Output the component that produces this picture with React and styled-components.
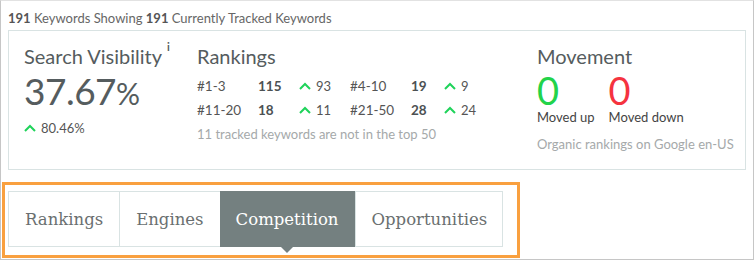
import React from 'react'
import styled, { createGlobalStyle } from 'styled-components'

const GlobalStyle = createGlobalStyle`
  body {
    margin: 0;
    background: #fff;
    font-family: Lato, "Open Sans", sans-serif;
  }
`

const Frame = styled.div`
  box-sizing: border-box;
  width: 754px;
  height: 260px;
  border: 1px solid #c6c6c6;
  border-top-color: #e2e2e2;
  position: relative;
`

const Summary = styled.div`
  font-size: 13px;
  color: #666;
  padding: 9px 0 0 7px;
  height: 20px;
  b {
    font-weight: 700;
    color: #555;
  }
`

const Card = styled.div`
  box-sizing: border-box;
  margin: 0 7px;
  height: 140px;
  border: 1px solid #d9e3e3;
  padding: 12px 0 0 15px;
  display: grid;
  grid-template-columns: 173px 340px 1fr;
`

const Heading = styled.div`
  font-size: 20px;
  color: #555c5e;
  line-height: 26px;
  sup {
    position: relative;
    top: -5px;
    font-size: 11px;
    font-weight: 700;
    line-height: 0;
    margin-left: 5px;
  }
`

const BigValue = styled.div`
  font-size: 37px;
  color: #555c5e;
  line-height: 40px;
  margin-top: 2px;
  letter-spacing: -0.5px;
  small {
    font-size: 30px;
    letter-spacing: 0;
  }
`

const Change = styled.span`
  display: inline-flex;
  align-items: center;
  gap: 5px;
  font-size: 13px;
  color: #555;
`

const SubChange = styled.div`
  margin-top: 3px;
`

const Table = styled.div`
  display: grid;
  grid-template-columns: 61px 41px 51px 61px 33px 50px;
  grid-auto-rows: 24px;
  align-items: center;
  margin-top: 5px;
  font-size: 13.5px;
  color: #555;
`

const Strong = styled.span`
  font-weight: 700;
  color: #4c5153;
`

const Note = styled.div`
  font-size: 13px;
  color: #a5a9aa;
  margin-top: ${p => p.$gap || 4}px;
`

const Counts = styled.div`
  display: flex;
  gap: 14px;
  margin-top: 2px;
`

const Count = styled.div`
  display: flex;
  flex-direction: column;
  font-size: 13px;
  color: #444;
`

const Zero = styled.span`
  font-size: 38px;
  line-height: 38px;
  color: ${p => p.$color};
`

const Tabs = styled.div`
  box-sizing: border-box;
  width: 518px;
  margin: 12px 0 0 1px;
  border: 3px solid #f9a03f;
  padding: 6px 14px 8px 3px;
`

const TabRow = styled.div`
  display: flex;
  height: 56px;
  box-sizing: border-box;
  border: 1px solid #d9e3e3;
`

const Tab = styled.div`
  position: relative;
  display: flex;
  align-items: center;
  padding: 0 16px;
  font-family: "DejaVu Serif", serif;
  font-size: 16.5px;
  color: ${p => (p.$active ? '#fff' : '#6a6f70')};
  background: ${p => (p.$active ? '#748080' : 'transparent')};
  margin: ${p => (p.$active ? '-1px 0' : '0')};
  border-left: ${p => (p.$first || p.$active ? 'none' : '1px solid #d9e3e3')};
  &::after {
    content: '';
    display: ${p => (p.$active ? 'block' : 'none')};
    position: absolute;
    left: 50%;
    bottom: -6px;
    margin-left: -6px;
    border-left: 6px solid transparent;
    border-right: 6px solid transparent;
    border-top: 6px solid #748080;
  }
`

const Up = () => (
  <svg width="12" height="8" viewBox="0 0 12 8">
    <path d="M1 7 L6 2 L11 7" fill="none" stroke="#1fd35a" strokeWidth="2" />
  </svg>
)

const rows = [
  ['#1-3', '115', '93', '#4-10', '19', '9'],
  ['#11-20', '18', '11', '#21-50', '28', '24'],
]

export default function App() {
  return (
    <Frame>
      <GlobalStyle />
      <Summary>
        <b>191</b> Keywords Showing <b>191</b> Currently Tracked Keywords
      </Summary>
      <Card>
        <div>
          <Heading>
            Search Visibility<sup>i</sup>
          </Heading>
          <BigValue>
            37.67<small>%</small>
          </BigValue>
          <SubChange>
            <Change>
              <Up />
              80.46%
            </Change>
          </SubChange>
        </div>
        <div>
          <Heading>Rankings</Heading>
          <Table>
            {rows.map(r => (
              <React.Fragment key={r[0]}>
                <span>{r[0]}</span>
                <Strong>{r[1]}</Strong>
                <Change>
                  <Up />
                  {r[2]}
                </Change>
                <span>{r[3]}</span>
                <Strong>{r[4]}</Strong>
                <Change>
                  <Up />
                  {r[5]}
                </Change>
              </React.Fragment>
            ))}
          </Table>
          <Note>11 tracked keywords are not in the top 50</Note>
        </div>
        <div>
          <Heading>Movement</Heading>
          <Counts>
            <Count>
              <Zero $color="#22d34a">0</Zero>
              Moved up
            </Count>
            <Count>
              <Zero $color="#f5333f">0</Zero>
              Moved down
            </Count>
          </Counts>
          <Note $gap={11}>Organic rankings on Google en-US</Note>
        </div>
      </Card>
      <Tabs>
        <TabRow>
          <Tab $first>Rankings</Tab>
          <Tab>Engines</Tab>
          <Tab $active>Competition</Tab>
          <Tab>Opportunities</Tab>
        </TabRow>
      </Tabs>
    </Frame>
  )
}
